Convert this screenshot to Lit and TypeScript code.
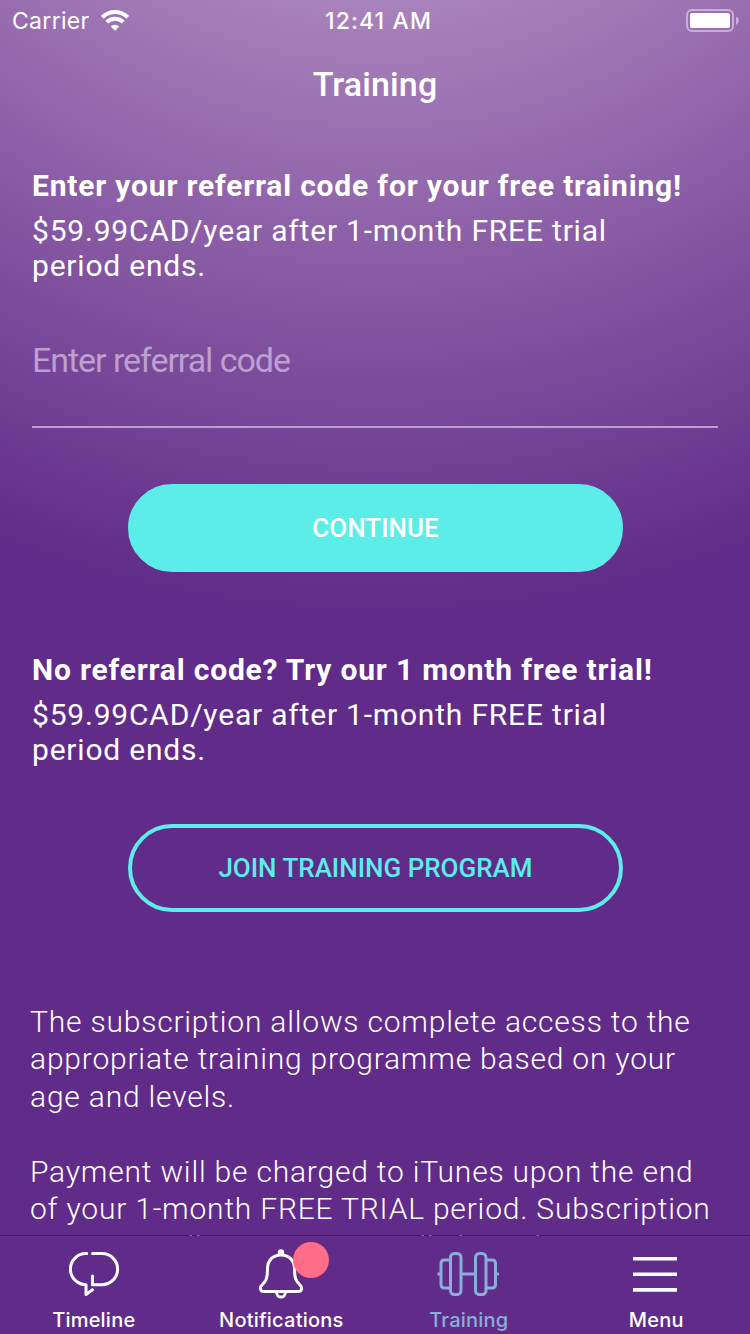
import { LitElement, html, svg, css } from "lit";
import { customElement } from "lit/decorators.js";

const timelineIcon = svg`<svg width="52" height="48" viewBox="0 0 52 48" fill="none" stroke="#fff" stroke-width="3" stroke-linecap="round" stroke-linejoin="round">
  <path d="M18.700 3.500H18A15.600 15.600 0 0 0 18 34.700V44.500L24.500 39.800"/>
  <path d="M24.500 3.500H34A15.600 15.600 0 0 1 34 34.700H24.500V26"/>
</svg>`;

const bellIcon = svg`<svg width="46" height="52" viewBox="0 0 46 52" fill="none" stroke="#fff" stroke-width="3" stroke-linejoin="round">
  <circle cx="23" cy="4.500" r="3.2" fill="#fff" stroke="none"/>
  <path d="M23 7C14 7 9.5 13.500 9.5 20.500C9.5 31 8 33 3.6 37.500C1.3 40 2.6 43.400 5.5 43.400H40.5C43.4 43.400 44.700 40 42.4 37.500C38 33 36.500 31 36.500 20.500C36.500 13.500 32 7 23 7Z"/>
  <path d="M18.500 43.400C18.500 51 27.500 51 27.500 43.400"/>
</svg>`;

const dumbbellIcon = svg`<svg width="64" height="46" viewBox="0 0 64 46" fill="none" stroke="#8aaeda" stroke-width="3">
  <rect x="14.500" y="2.500" width="10.500" height="41" rx="4"/>
  <rect x="39.500" y="2.500" width="10.500" height="41" rx="4"/>
  <path d="M14.500 9H8.500Q5 9 5 12.500V33.500Q5 37 8.500 37H14.500M50 9H56Q59.500 9 59.500 12.500V33.500Q59.500 37 56 37H50M25 23H39.500M1.500 23H5M59.500 23H63"/>
</svg>`;

const menuIcon = svg`<svg width="44" height="36" viewBox="0 0 44 36" fill="none" stroke="#fff" stroke-width="3.600">
  <path d="M0 2.700H44M0 18.300H44M0 33.900H44"/>
</svg>`;

const wifiIcon = svg`<svg width="28" height="22" viewBox="0 0 28 22" fill="none" stroke="#fff" stroke-width="4">
  <path d="M1.300 7.300A18 18 0 0 1 26.700 7.300"/>
  <path d="M5.800 12.200A11.600 11.600 0 0 1 22.200 12.200"/>
  <path d="M14 20.800L9.800 16.500A6 6 0 0 1 18.200 16.500Z" fill="#fff" stroke="none"/>
</svg>`;

const batteryIcon = svg`<svg width="54" height="24" viewBox="0 0 54 24">
  <rect x="1" y="1" width="46" height="21" rx="5" fill="none" stroke="#caaed9" stroke-width="2"/>
  <rect x="4" y="4" width="40" height="15" rx="2" fill="#fff"/>
  <path d="M50 7.500Q53 9 53 11.500T50 16Z" fill="#caaed9"/>
</svg>`;

@customElement("app-root")
export class AppRoot extends LitElement {
  static styles = css`
    :host {
      display: flex;
      flex-direction: column;
      width: 750px;
      height: 1334px;
      overflow: hidden;
      color: #fff;
      font-family: Roboto, sans-serif;
      background: radial-gradient(circle 1015px at 378px -400px, #a983bc 39.4%, #612b89 100%);
    }
    * { box-sizing: border-box; }
    svg { display: block; flex: none; }
    .status {
      display: grid;
      grid-template-columns: 1fr auto 1fr;
      align-items: center;
      height: 42px;
      padding: 0 10px 0 12px;
      font-family: Inter, sans-serif;
      font-size: 23px;
    }
    .carrier { display: flex; align-items: center; gap: 11px; letter-spacing: 0.3px; }
    .clock { font-weight: 500; letter-spacing: 1.1px; padding-left: 5px; }
    .battery { justify-self: end; }
    .title {
      margin: 0;
      height: 86px;
      line-height: 84px;
      text-align: center;
      font-size: 34px;
      font-weight: 500;
      letter-spacing: 0.1px;
    }
    .scroll { flex: 1; min-height: 0; overflow: hidden; padding: 0 32px; }
    .offer { margin-top: 40px; }
    .offer-title { margin: 0; font-size: 30px; line-height: 36px; font-weight: 700; letter-spacing: 0.81px; white-space: nowrap; }
    .price { margin: 9px 0 0; font-size: 30px; line-height: 35px; letter-spacing: 0.8px; }
    .code {
      display: block;
      width: 686px;
      height: 85px;
      margin-top: 60px;
      padding: 0 0 50px;
      border: 0;
      border-bottom: 2px solid #bb9fce;
      background: none;
      outline: none;
      color: #fff;
      font: 34px/35px Roboto, sans-serif;
      letter-spacing: -1.05px;
    }
    .code::placeholder { color: #bd9fd0; opacity: 1; }
    .button {
      display: block;
      width: 495px;
      height: 88px;
      margin: 56px 0 0 96px;
      padding: 0;
      border: 4px solid #5dede9;
      border-radius: 44px;
      font: 500 26px Roboto, sans-serif;
    }
    .filled { background: #5dede9; color: #fff; }
    .outlined { background: none; color: #5dede9; margin-top: 57px; }
    .second { margin-top: 80px; }
    .terms {
      margin: 90.8px -10px 0 -2px;
      font-size: 30px;
      line-height: 37.5px;
      font-weight: 300;
      letter-spacing: 0.8px;
    }
    .terms p { margin: 0 0 37.5px; white-space: nowrap; }
    .tabs {
      position: relative;
      display: grid;
      grid-template-columns: repeat(4, 1fr);
      height: 99px;
      margin-top: -1px;
      flex: none;
      border-top: 1px solid rgba(48, 8, 84, 0.5);
      background: #612b89;
      background-clip: padding-box;
      font-family: Inter, sans-serif;
      font-size: 20px;
      font-weight: 500;
      letter-spacing: 0.22px;
    }
    .tab { display: flex; flex-direction: column; align-items: center; }
    .glyph { position: relative; display: flex; align-items: center; justify-content: center; height: 72px; padding-top: 4px; }
    .nudged { padding-right: 2px; }
    .label { line-height: 24px; }
    .active { color: #8aaeda; }
    .dot { position: absolute; left: 35px; top: 6px; width: 36px; height: 36px; border-radius: 50%; background: #ff6d88; }
  `;

  render() {
    return html`
      <div class="status">
        <div class="carrier"><span>Carrier</span>${wifiIcon}</div>
        <span class="clock">12:41 AM</span>
        <div class="battery">${batteryIcon}</div>
      </div>
      <h1 class="title">Training</h1>
      <main class="scroll">
        <section class="offer">
          <h2 class="offer-title">Enter your referral code for your free training!</h2>
          <p class="price">$59.99CAD/year after 1-month FREE trial<br />period ends.</p>
          <input class="code" placeholder="Enter referral code" />
          <button class="button filled">CONTINUE</button>
        </section>
        <section class="offer second">
          <h2 class="offer-title">No referral code? Try our 1 month free trial!</h2>
          <p class="price">$59.99CAD/year after 1-month FREE trial<br />period ends.</p>
          <button class="button outlined">JOIN TRAINING PROGRAM</button>
        </section>
        <section class="terms">
          <p>The subscription allows complete access to the<br />appropriate training programme based on your<br />age and levels.</p>
          <p>Payment will be charged to iTunes upon the end<br />of your 1-month FREE TRIAL period. Subscription<br />automatically renews annually based on</p>
        </section>
      </main>
      <nav class="tabs">
        <div class="tab"><div class="glyph">${timelineIcon}</div><span class="label">Timeline</span></div>
        <div class="tab"><div class="glyph">${bellIcon}<span class="dot"></span></div><span class="label">Notifications</span></div>
        <div class="tab active"><div class="glyph nudged">${dumbbellIcon}</div><span class="label">Training</span></div>
        <div class="tab"><div class="glyph nudged">${menuIcon}</div><span class="label">Menu</span></div>
      </nav>
    `;
  }
}
